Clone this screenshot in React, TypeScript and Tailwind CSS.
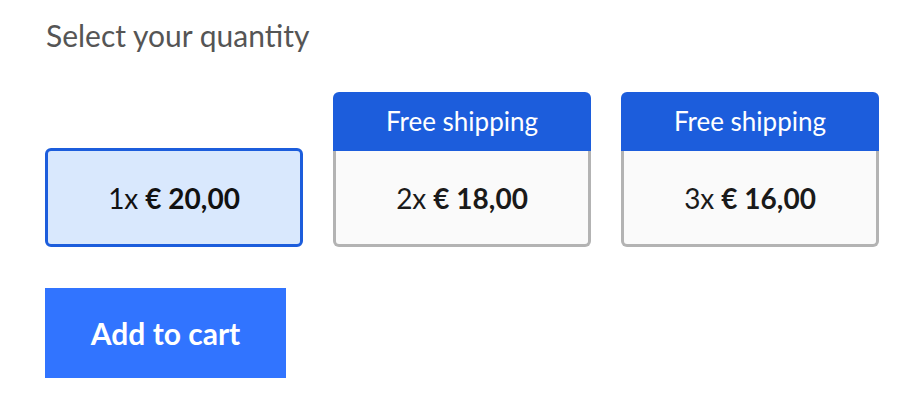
import React from "react";

const options = [
  { qty: "1x", price: "€ 20,00", free: false, selected: true },
  { qty: "2x", price: "€ 18,00", free: true, selected: false },
  { qty: "3x", price: "€ 16,00", free: true, selected: false },
];

export default function App() {
  return (
    <div className="w-[914px] h-[418px] bg-white pl-[45px] pt-[15px] font-['Lato',sans-serif]">
      <h2 className="text-[30px] leading-[40px] text-[#555] ml-[1px]">Select your quantity</h2>

      {/* Quantity options */}
      <div className="flex items-end gap-[30px] mt-[37px]">
        {options.map((o) =>
          o.free ? (
            <div key={o.qty} className="w-[258px] flex flex-col">
              <div className="h-[59px] bg-[#1c5ddc] rounded-t-[6px] flex items-center justify-center text-white text-[26px]">
                Free shipping
              </div>
              <div className="h-[96px] bg-[#fafafa] border-[3px] border-t-0 border-[#b3b3b3] rounded-b-[6px] flex items-center justify-center text-[28px] text-[#1a1a1a]">
                <span>{o.qty}</span>
                <span className="font-bold ml-[7px]">{o.price}</span>
              </div>
            </div>
          ) : (
            <div
              key={o.qty}
              className="w-[258px] h-[99px] bg-[#d9e8fd] border-[3px] border-[#1c5ddc] rounded-[6px] flex items-center justify-center text-[28px] text-[#111]"
            >
              <span>{o.qty}</span>
              <span className="font-bold ml-[7px]">{o.price}</span>
            </div>
          )
        )}
      </div>

      <button className="mt-[41px] w-[241px] h-[90px] bg-[#3174ff] text-white text-[30px] font-bold">
        Add to cart
      </button>
    </div>
  );
}
